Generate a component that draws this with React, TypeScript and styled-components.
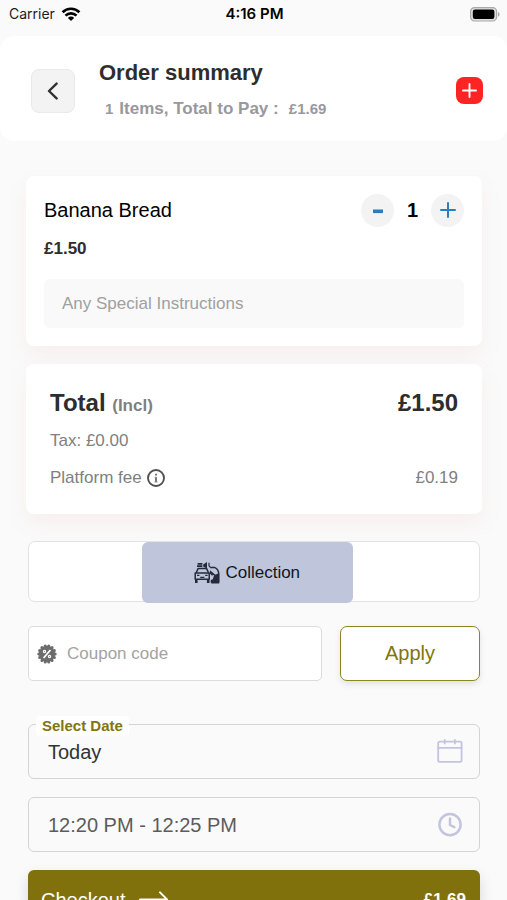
import React, { useState } from "react";
import styled, { createGlobalStyle } from "styled-components";

const GlobalStyle = createGlobalStyle`
  *, *::before, *::after { box-sizing: border-box; }
  html { scrollbar-width: none; background: #fafafa; }
  body {
    margin: 0;
    background: #fafafa;
    color: #2d2d2d;
    font-family: "Liberation Sans", Arial, Helvetica, sans-serif;
  }
  button, input, select { font-family: inherit; margin: 0; }
  button { cursor: pointer; padding: 0; }
`;

const Page = styled.div`
  min-height: 100vh;
`;

const StatusBar = styled.div`
  display: grid;
  grid-template-columns: 1fr auto 1fr;
  align-items: center;
  height: 36px;
  padding: 0 7px 8px 9px;
  font-family: Inter, sans-serif;
  font-size: 14px;
  line-height: 20px;
  color: #1c1c1c;
`;

const Carrier = styled.span`
  display: flex;
  align-items: center;
  gap: 6px;
`;

const Clock = styled.strong`
  font-size: 15px;
  font-weight: 600;
  color: #000;
`;

const Battery = styled.span`
  display: flex;
  justify-content: flex-end;
`;

const Header = styled.header`
  display: flex;
  align-items: center;
  gap: 24px;
  padding: 23px 24px 19px 31px;
  border-radius: 14px;
  background: #fff;
`;

const BackButton = styled.button`
  display: grid;
  place-items: center;
  width: 44px;
  height: 44px;
  border: 1px solid #e9e9e9;
  border-radius: 8px;
  background: #f3f3f3;
`;

const Heading = styled.div`
  flex: 1;
`;

const Title = styled.h1`
  margin: 0;
  font-size: 22px;
  line-height: 28px;
`;

const Subtitle = styled.p`
  display: flex;
  align-items: baseline;
  gap: 6px;
  margin: 9px 0 0 6px;
  padding-bottom: 1px;
  font-size: 17px;
  font-weight: 700;
  line-height: 25px;
  color: #98989d;
`;

const Small = styled.span`
  font-size: 15px;
`;

const AddButton = styled.button`
  display: grid;
  place-items: center;
  width: 27px;
  height: 27px;
  border: 0;
  border-radius: 8px;
  background: #ff2424;
  color: #fff;
`;

const Content = styled.main`
  padding: 35px 25px 0 26px;
`;

const Card = styled.section`
  margin-bottom: 18px;
  padding: 17px 18px 18px;
  border-radius: 8px;
  background: #fff;
  box-shadow: 0 10px 22px rgba(220, 120, 100, 0.08);
`;

const TotalsCard = styled(Card)`
  padding: 20px 24px 18px;
`;

const Row = styled.div`
  display: flex;
  align-items: center;
  justify-content: space-between;
`;

const ItemName = styled.h2`
  margin: 0;
  font-size: 20px;
  font-weight: 400;
  line-height: 34px;
  color: #000;
`;

const Stepper = styled.div`
  display: grid;
  grid-template-columns: 33px 37px 33px;
  align-items: center;
  text-align: center;
`;

const StepButton = styled.button`
  display: grid;
  place-items: center;
  width: 33px;
  height: 33px;
  border: 0;
  border-radius: 50%;
  background: #f3f3f3;
  color: #2f7cbc;
`;

const Quantity = styled.output`
  font-size: 20px;
  font-weight: 700;
  color: #000;
`;

const ItemPrice = styled.p`
  margin: 11px 0 19px;
  font-size: 17px;
  font-weight: 700;
  line-height: 22px;
`;

const Instructions = styled.input`
  display: block;
  width: 100%;
  height: 49px;
  padding: 0 18px;
  border: 0;
  border-radius: 6px;
  background: #f9f9f9;
  font-size: 17px;
  color: #2d2d2d;
  &::placeholder { color: #a0a0a0; opacity: 1; }
`;

const Total = styled.h2`
  margin: 0;
  font-size: 24px;
  line-height: 38px;
`;

const Incl = styled.span`
  font-size: 17px;
  line-height: 1;
  color: #808080;
`;

const FeeRow = styled(Row)`
  padding: 8px 0 7px;
  font-size: 17px;
  line-height: 22px;
  color: #808080;
`;

const FeeLabel = styled.span`
  display: flex;
  align-items: center;
  gap: 5px;
`;

const InfoButton = styled.button`
  display: flex;
  border: 0;
  background: none;
  color: #505050;
`;

const Form = styled.form`
  padding: 9px 2px 30px;
`;

const Methods = styled.div`
  display: grid;
  grid-template-columns: 25% 47%;
  height: 61px;
  margin-bottom: 24px;
  border: 1px solid #e2e2e2;
  border-radius: 7px;
  background: #fff;
`;

const Method = styled.button`
  display: flex;
  grid-column: 2;
  align-items: center;
  justify-content: center;
  gap: 5px;
  height: 61px;
  border: 0;
  border-radius: 6px;
  background: #bfc6dc;
  font-size: 17px;
  color: #101522;
`;

const CouponRow = styled.div`
  display: grid;
  grid-template-columns: 1fr 140px;
  gap: 18px;
  margin-bottom: 43px;
`;

const CouponField = styled.label`
  display: flex;
  align-items: center;
  gap: 10px;
  height: 55px;
  padding: 0 8px;
  border: 1px solid #dcdcdc;
  border-radius: 5px;
  background: #fff;
`;

const CouponInput = styled.input`
  flex: 1;
  min-width: 0;
  padding: 0;
  border: 0;
  background: none;
  font-size: 17px;
  &::placeholder { color: #a3a3a3; opacity: 1; }
`;

const ApplyButton = styled.button`
  height: 55px;
  border: 1px solid #8b8621;
  border-radius: 7px;
  background: #fff;
  font-size: 20px;
  color: #80760c;
  box-shadow: 0 3px 6px rgba(0, 0, 0, 0.1);
`;

const SelectField = styled.div`
  position: relative;
  margin-bottom: 18px;
`;

const FloatingLabel = styled.label`
  position: absolute;
  top: -8px;
  left: 8px;
  padding: 0 6px;
  border-radius: 4px;
  background: #fff;
  font-size: 15px;
  font-weight: 700;
  line-height: 20px;
  color: #81760d;
`;

const Select = styled.select<{ $muted?: boolean }>`
  display: block;
  width: 100%;
  height: 55px;
  padding: 0 56px 0 19px;
  border: 1px solid #d4d4d4;
  border-radius: 6px;
  appearance: none;
  background: #fafafa;
  font-size: 20px;
  color: ${(p) => (p.$muted ? "#5c5c5c" : "#333")};
`;

const FieldIcon = styled.span`
  position: absolute;
  top: 0;
  right: 17px;
  bottom: 0;
  display: flex;
  align-items: center;
  color: #c3c5df;
  pointer-events: none;
`;

const Checkout = styled.button`
  display: flex;
  align-items: center;
  justify-content: space-between;
  width: 100%;
  height: 60px;
  padding: 0 14px 0 13px;
  border: 0;
  border-radius: 6px;
  background: #80710c;
  font-size: 20px;
  color: #fff;
  box-shadow: 0 6px 14px rgba(0, 0, 0, 0.14);
`;

const CheckoutLabel = styled.span`
  display: flex;
  align-items: center;
  gap: 13px;
`;

const CheckoutPrice = styled.strong`
  font-size: 17px;
`;

const WifiIcon = () => (
  <svg width="20" height="14" viewBox="0 0 20 14" fill="none" stroke="#000" strokeWidth="2.7" aria-hidden="true">
    <path d="M1.6 5.2a12 12 0 0 1 16.8 0" />
    <path d="M4.5 8.6a7.8 7.8 0 0 1 11 0" />
    <path d="M10 13.9 6.9 10.9a4.3 4.3 0 0 1 6.2 0z" fill="#000" stroke="none" />
  </svg>
);

const BatteryIcon = () => (
  <svg width="30" height="15" viewBox="0 0 30 15" aria-hidden="true">
    <rect x="0.6" y="0.6" width="26" height="13.4" rx="4" fill="#e0e0e0" stroke="#a9a9a9" strokeWidth="1.2" />
    <rect x="2.8" y="2.6" width="21.6" height="9.4" rx="2.2" />
    <path d="M28 5c2 .8 2 3.8 0 4.6z" fill="#a9a9a9" />
  </svg>
);

const BackIcon = () => (
  <svg width="12" height="18" viewBox="0 0 12 18" fill="none" stroke="#303030" strokeWidth="2.4" strokeLinecap="round" strokeLinejoin="round" aria-hidden="true">
    <path d="M9.6 1.6 2 9l7.6 7.4" />
  </svg>
);

const PlusIcon = ({ size, width }: { size: number; width: number }) => (
  <svg width={size} height={size} viewBox="0 0 16 16" fill="none" stroke="currentColor" strokeWidth={width} strokeLinecap="round" aria-hidden="true">
    <path d="M8 1v14M1 8h14" />
  </svg>
);

const MinusIcon = () => (
  <svg width="12" height="16" viewBox="0 0 12 16" aria-hidden="true">
    <rect x="1" y="7.5" width="10" height="3.6" fill="currentColor" />
  </svg>
);

const InfoIcon = () => (
  <svg width="18" height="18" viewBox="0 0 18 18" fill="none" stroke="currentColor" aria-hidden="true">
    <circle cx="9" cy="9" r="8" strokeWidth="1.9" />
    <path d="M9 8v5M9 4.7v1.9" strokeWidth="2" stroke="#777" />
    <path d="M7.6 8.2H9M7.4 13h3.2" stroke="#999" />
  </svg>
);

const CollectionIcon = () => (
  <svg width="26" height="22" viewBox="0 0 26 22" fill="none" stroke="#252a3b" strokeWidth="1.5" strokeLinejoin="round" aria-hidden="true">
    <path d="M2.2 10.7 4.2 6.4h8.3l2 4.3" />
    <path d="M1.2 11h14v6.3h-14z" />
    <path d="M2.3 17v4M14.2 17v4" strokeWidth="2.6" />
    <path d="M3 13.4h2.4M11.2 13.4h2.4M6.2 15.3h4.2" strokeWidth="1.3" />
    <path d="M3 4.2h5.4M3.6 1.8h4.8" strokeWidth="1.8" />
    <path d="M9.2 2.4 13 0v6.4L9.2 4.4z" fill="#252a3b" stroke="none" />
    <path d="M15 .8v3l1.4 1.5" strokeWidth="1.2" />
    <path d="M16.2 5.4h4.3c2.6 1 4.2 3.5 4.2 7v8" strokeWidth="1.5" />
    <path d="m16 8.2 5.4 4.6-3.6.8-2-2z" fill="#252a3b" stroke="none" />
    <path d="m20.2 13 5-1.7V21.6h-7.7c-1.6-2.3-1-4.2 1.3-4.4z" fill="#252a3b" stroke="none" />
  </svg>
);

const PercentIcon = () => (
  <svg width="20" height="20" viewBox="0 0 20 20" aria-hidden="true">
    <circle cx="10" cy="10" r="8.2" fill="#6c6c6c" />
    <circle cx="10" cy="10" r="8.2" fill="none" stroke="#6c6c6c" strokeWidth="3" strokeLinecap="round" pathLength="140" strokeDasharray="0 10" />
    <g fill="none" stroke="#fff">
      <path d="m13.4 6-6.8 8" strokeWidth="1.8" />
      <circle cx="7.5" cy="7.5" r="1.1" strokeWidth="1.2" />
      <circle cx="12.5" cy="12.5" r="1.1" strokeWidth="1.2" />
    </g>
  </svg>
);

const CalendarIcon = () => (
  <svg width="26" height="26" viewBox="0 0 26 26" fill="none" stroke="currentColor" strokeWidth="1.8" strokeLinecap="round" aria-hidden="true">
    <rect x="1.2" y="2.6" width="23.4" height="20.2" rx="1.6" />
    <path d="M1.2 8.8h23.4M7.7 1v3.6M17.9 1v3.6" />
  </svg>
);

const ClockIcon = () => (
  <svg width="26" height="26" viewBox="0 0 26 26" fill="none" stroke="currentColor" strokeWidth="2.5" strokeLinecap="round" strokeLinejoin="round" aria-hidden="true">
    <circle cx="13" cy="12.6" r="10.6" />
    <path d="M13 6.6V13l4.3 2.1" />
  </svg>
);

const ArrowIcon = () => (
  <svg width="30" height="18" viewBox="0 0 30 18" fill="none" stroke="#fff" strokeWidth="2" strokeLinecap="round" strokeLinejoin="round" aria-hidden="true">
    <path d="M1 8.4h27M21 1.4l7 7-7 7" />
  </svg>
);

export default function App() {
  const [quantity, setQuantity] = useState(1);

  return (
    <Page>
      <GlobalStyle />
      <StatusBar>
        <Carrier>
          Carrier <WifiIcon />
        </Carrier>
        <Clock>4:16 PM</Clock>
        <Battery>
          <BatteryIcon />
        </Battery>
      </StatusBar>

      <Header>
        <BackButton type="button" aria-label="Back">
          <BackIcon />
        </BackButton>
        <Heading>
          <Title>Order summary</Title>
          <Subtitle>
            <Small>1</Small>
            <span>Items, Total to Pay :</span>
            <Small>&nbsp;£1.69</Small>
          </Subtitle>
        </Heading>
        <AddButton type="button" aria-label="Add items">
          <PlusIcon size={15} width={2} />
        </AddButton>
      </Header>

      <Content>
        <Card>
          <Row>
            <ItemName>Banana Bread</ItemName>
            <Stepper>
              <StepButton type="button" aria-label="Decrease quantity" onClick={() => setQuantity(Math.max(1, quantity - 1))}>
                <MinusIcon />
              </StepButton>
              <Quantity>{quantity}</Quantity>
              <StepButton type="button" aria-label="Increase quantity" onClick={() => setQuantity(quantity + 1)}>
                <PlusIcon size={16} width={2} />
              </StepButton>
            </Stepper>
          </Row>
          <ItemPrice>£1.50</ItemPrice>
          <Instructions aria-label="Special instructions" placeholder="Any Special Instructions" />
        </Card>

        <TotalsCard>
          <Row>
            <Total>
              Total <Incl>(Incl)</Incl>
            </Total>
            <Total as="strong">£1.50</Total>
          </Row>
          <FeeRow>Tax: £0.00</FeeRow>
          <FeeRow>
            <FeeLabel>
              Platform fee
              <InfoButton type="button" aria-label="About the platform fee">
                <InfoIcon />
              </InfoButton>
            </FeeLabel>
            <span>£0.19</span>
          </FeeRow>
        </TotalsCard>

        <Form onSubmit={(e) => e.preventDefault()}>
          <Methods>
            <Method type="button" aria-pressed="true">
              <CollectionIcon />
              Collection
            </Method>
          </Methods>

          <CouponRow>
            <CouponField>
              <PercentIcon />
              <CouponInput aria-label="Coupon code" placeholder="Coupon code" />
            </CouponField>
            <ApplyButton type="button">Apply</ApplyButton>
          </CouponRow>

          <SelectField>
            <Select id="date" defaultValue="Today">
              <option>Today</option>
            </Select>
            <FloatingLabel htmlFor="date">Select Date</FloatingLabel>
            <FieldIcon>
              <CalendarIcon />
            </FieldIcon>
          </SelectField>

          <SelectField>
            <Select $muted aria-label="Collection time" defaultValue="12:20 PM - 12:25 PM">
              <option>12:20 PM - 12:25 PM</option>
            </Select>
            <FieldIcon>
              <ClockIcon />
            </FieldIcon>
          </SelectField>

          <Checkout type="submit">
            <CheckoutLabel>
              Checkout <ArrowIcon />
            </CheckoutLabel>
            <CheckoutPrice>£1.69</CheckoutPrice>
          </Checkout>
        </Form>
      </Content>
    </Page>
  );
}
